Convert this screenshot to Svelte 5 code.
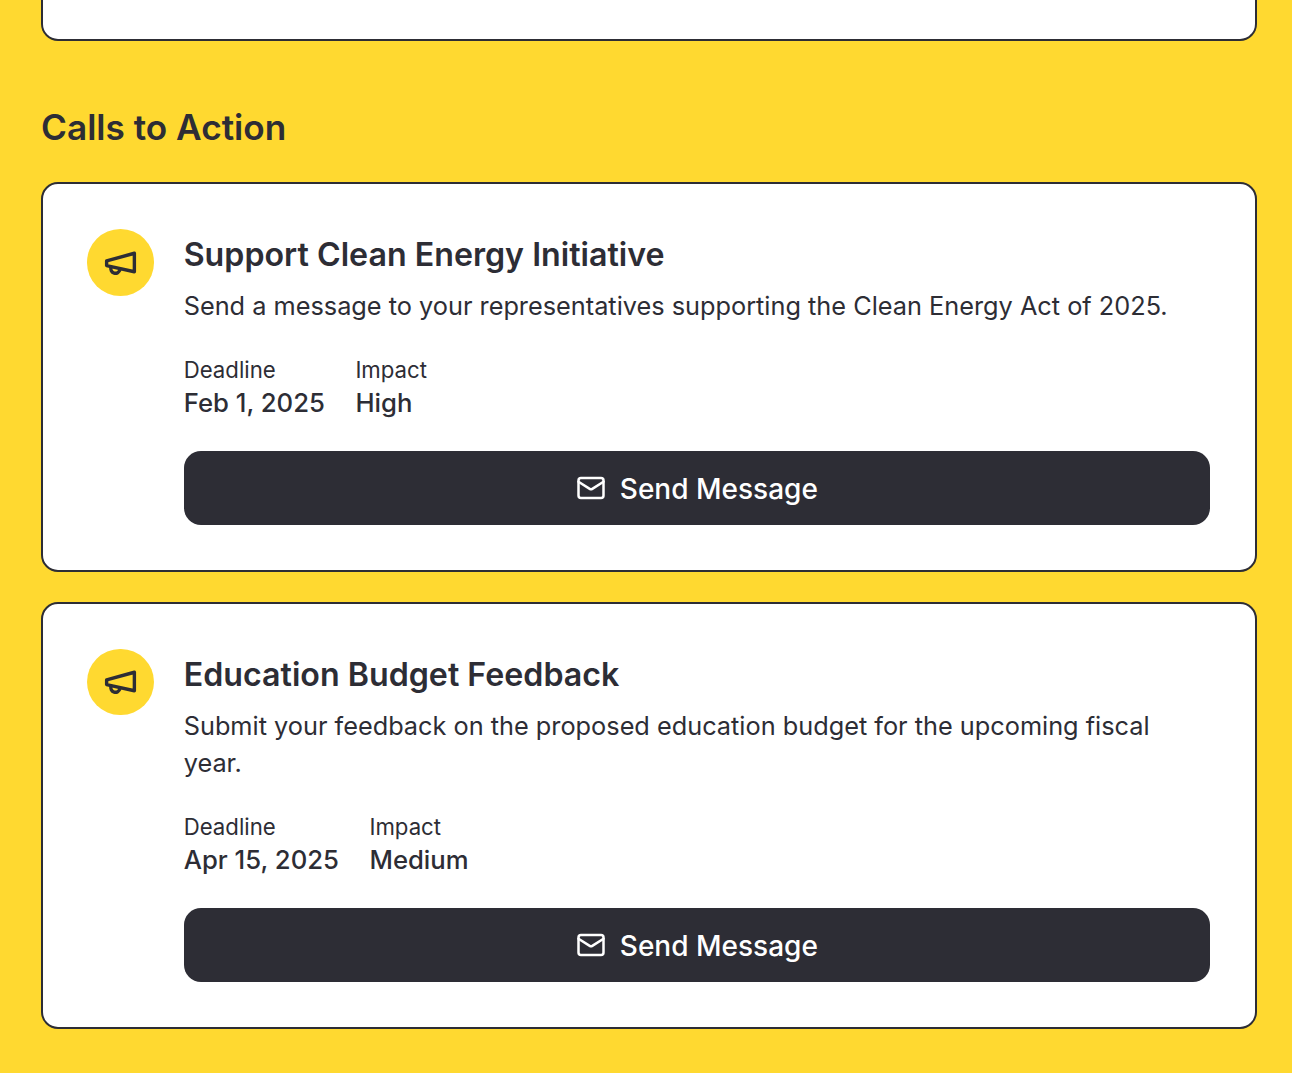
<script>
  const actions = [
    {
      title: "Support Clean Energy Initiative",
      text: "Send a message to your representatives supporting the Clean Energy Act of 2025.",
      deadline: "Feb 1, 2025",
      impact: "High",
    },
    {
      title: "Education Budget Feedback",
      text: "Submit your feedback on the proposed education budget for the upcoming fiscal year.",
      deadline: "Apr 15, 2025",
      impact: "Medium",
    },
  ];
</script>

<main class="page">
  <div class="card-stub"></div>
  <h2 class="section-title">Calls to Action</h2>
  <div class="list">
    {#each actions as action}
      <article class="card">
        <div class="badge">
          <svg class="megaphone" viewBox="0 0 24 24" fill="none" stroke="currentColor" stroke-width="2.2" stroke-linecap="round" stroke-linejoin="round">
            <path d="m3 11 18-5v12L3 14v-3z" />
            <path d="M11.6 16.8a3 3 0 1 1-5.8-1.6" />
          </svg>
        </div>
        <div class="body">
          <h3 class="title">{action.title}</h3>
          <p class="text">{action.text}</p>
          <div class="meta">
            <div>
              <div class="label">Deadline</div>
              <div class="value">{action.deadline}</div>
            </div>
            <div>
              <div class="label">Impact</div>
              <div class="value">{action.impact}</div>
            </div>
          </div>
          <button type="button" class="send">
            <svg class="mail" viewBox="0 0 24 24" fill="none" stroke="currentColor" stroke-width="2" stroke-linecap="round" stroke-linejoin="round">
              <rect x="2" y="4" width="20" height="16" rx="2" />
              <path d="m22 7-8.97 5.7a1.94 1.94 0 0 1-2.06 0L2 7" />
            </svg>
            <span class="send-label">Send Message</span>
          </button>
        </div>
      </article>
    {/each}
  </div>
</main>

<style>
  :global(body) {
    background: #ffd930;
    font-family: Inter, "Liberation Sans", sans-serif;
    color: #2d2d35;
  }

  .page {
    height: 1073px;
    overflow: hidden;
    padding: 0 35px 0 41px;
    box-sizing: border-box;
  }

  .card-stub {
    height: 41px;
    box-sizing: border-box;
    background: #fff;
    border: 2px solid #2d2d35;
    border-top: none;
    border-radius: 0 0 17px 17px;
  }

  .section-title {
    margin: 63px 0 32px;
    font-size: 35.2px;
    line-height: 46px;
    font-weight: 600;
  }

  .list {
    display: flex;
    flex-direction: column;
    gap: 29.5px;
  }

  .card {
    display: flex;
    gap: 30px;
    padding: 45px 44px 45px;
    background: #fff;
    border: 2px solid #2d2d35;
    border-radius: 17px;
  }

  .badge {
    flex: none;
    display: flex;
    align-items: center;
    justify-content: center;
    width: 66.7px;
    height: 66.7px;
    border-radius: 50%;
    background: #ffd930;
  }

  .megaphone {
    width: 37px;
    height: 37px;
  }

  .body {
    flex: 1;
    min-width: 0;
    padding-right: 1px;
  }

  .title {
    margin: 0 0 6px;
    font-size: 32.2px;
    line-height: 52px;
    font-weight: 600;
  }

  .text {
    margin: 0 0 28.8px;
    font-size: 25.3px;
    line-height: 37.2px;
  }

  .meta {
    display: flex;
    gap: 30.5px;
    margin-bottom: 32px;
  }

  .label {
    font-size: 22.2px;
    line-height: 33px;
  }

  .value {
    font-size: 25.7px;
    line-height: 33px;
    font-weight: 500;
  }

  .send {
    display: flex;
    align-items: center;
    justify-content: center;
    gap: 14px;
    width: 100%;
    height: 74px;
    border: none;
    border-radius: 17px;
    background: #2d2d35;
    color: #fff;
    font-family: inherit;
    font-size: 28px;
    font-weight: 500;
  }

  .send-label {
    padding-top: 2px;
  }

  .mail {
    width: 30px;
    height: 30px;
  }
</style>
